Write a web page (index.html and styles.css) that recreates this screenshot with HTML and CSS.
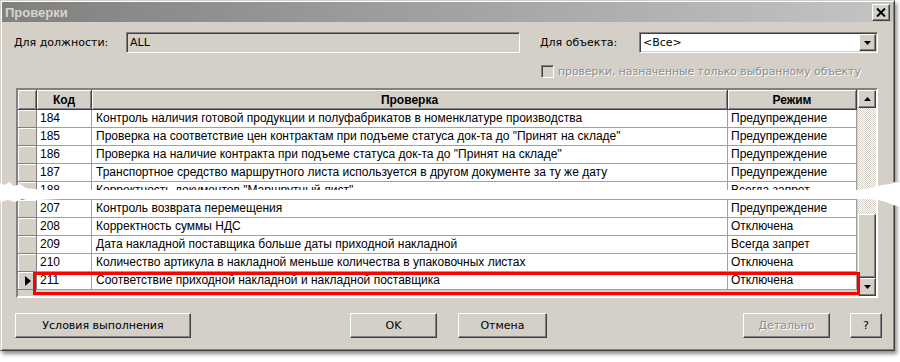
FILE: index.html
```html
<!DOCTYPE html>
<html lang="ru">
<head>
<meta charset="UTF-8">
<title>Проверки</title>
<link rel="stylesheet" href="styles.css">
</head>
<body>
<div class="page">
  <div class="dialog">
    <div class="titlebar">
      <span class="title">Проверки</span>
      <span class="close-btn">
        <svg width="10" height="9" viewBox="0 0 10 9"><path d="M1 0.5 L9 8.5 M9 0.5 L1 8.5" stroke="#000" stroke-width="2"/></svg>
      </span>
    </div>

    <div class="filters">
      <span class="label label-post">Для должности:</span>
      <div class="field field-post">ALL</div>
      <span class="label label-object">Для объекта:</span>
      <div class="combo">
        <span class="combo-text">&lt;Все&gt;</span>
        <span class="raised combo-btn">
          <svg width="7" height="4" viewBox="0 0 7 4"><polygon points="0,0 7,0 3.5,4" fill="#000"/></svg>
        </span>
      </div>
    </div>

    <div class="only-object">
      <span class="checkbox"></span>
      <span class="disabled-text">проверки, назначенные только выбранному объекту</span>
    </div>

    <div class="grid">
      <div class="grid-body">
        <table class="checks">
          <colgroup>
            <col class="col-ind">
            <col class="col-code">
            <col class="col-name">
            <col class="col-mode">
          </colgroup>
          <thead>
            <tr><th></th><th>Код</th><th>Проверка</th><th>Режим</th></tr>
          </thead>
          <tbody id="rows"></tbody>
        </table>
      </div>
      <div class="scrollbar">
        <span class="raised sb-btn">
          <svg width="7" height="4" viewBox="0 0 7 4"><polygon points="0,4 7,4 3.5,0" fill="#000"/></svg>
        </span>
        <span class="sb-track"></span>
        <span class="raised sb-thumb"></span>
        <span class="raised sb-btn">
          <svg width="7" height="4" viewBox="0 0 7 4"><polygon points="0,0 7,0 3.5,4" fill="#000"/></svg>
        </span>
      </div>
      <!-- рамка-выделение текущей строки -->
      <div class="highlight"></div>
    </div>

    <div class="buttons">
      <span class="raised btn btn-cond">Условия выполнения</span>
      <span class="raised btn btn-ok">OK</span>
      <span class="raised btn btn-cancel">Отмена</span>
      <span class="raised btn btn-detail disabled-text">Детально</span>
      <span class="raised btn btn-help">?</span>
    </div>
  </div>
  <div class="tear"></div>
</div>

<script>
  const CHECKS = [
    [184, 'Контроль наличия готовой продукции и полуфабрикатов в номенклатуре производства', 'Предупреждение'],
    [185, 'Проверка на соответствие цен контрактам при подъеме статуса док-та до "Принят на складе"', 'Предупреждение'],
    [186, 'Проверка на наличие контракта при подъеме статуса док-та до "Принят на складе"', 'Предупреждение'],
    [187, 'Транспортное средство маршрутного листа используется в другом документе за ту же дату', 'Предупреждение'],
    [188, 'Корректность документов "Маршрутный лист"', 'Всегда запрет'],
    [207, 'Контроль возврата перемещения', 'Предупреждение'],
    [208, 'Корректность суммы НДС', 'Отключена'],
    [209, 'Дата накладной поставщика больше даты приходной накладной', 'Всегда запрет'],
    [210, 'Количество артикула в накладной меньше количества в упаковочных листах', 'Отключена'],
    [211, 'Соответствие приходной накладной и накладной поставщика', 'Отключена']
  ];
  const CURRENT = 211;

  const tbody = document.getElementById('rows');
  CHECKS.forEach(([code, name, mode]) => {
    const tr = document.createElement('tr');
    const marker = code === CURRENT
      ? '<svg width="6" height="10" viewBox="0 0 6 10"><polygon points="0,0 6,5 0,10" fill="#000"/></svg>'
      : '';
    tr.innerHTML = `<td class="ind">${marker}</td><td>${code}</td><td class="name">${name}</td><td>${mode}</td>`;
    tbody.appendChild(tr);
  });
</script>
</body>
</html>
```

FILE: styles.css
```css
body {
  margin: 0;
  background: #fff;
  font-family: "DejaVu Sans", sans-serif;
  font-size: 11px;
  color: #000;
}
.page {
  position: relative;
  width: 900px;
  height: 362px;
  overflow: hidden;
}
.dialog {
  width: 895px;
  height: 351px;
  box-sizing: border-box;
  padding: 1px;
  background: #d4d0c8;
  border: 1px solid;
  border-color: #d4d0c8 #404040 #404040 #d4d0c8;
  box-shadow: inset 1px 1px #fff, inset -1px -1px #808080, 2px 3px 4px rgba(0,0,0,0.45);
}

/* общий выпуклый вид кнопок */
.raised {
  box-sizing: border-box;
  background: #d4d0c8;
  border: 1px solid;
  border-color: #fff #404040 #404040 #fff;
  box-shadow: inset -1px -1px #808080;
  display: flex;
  align-items: center;
  justify-content: center;
}

.titlebar {
  height: 20px;
  display: flex;
  align-items: center;
  justify-content: space-between;
  padding: 0 3px 0 3px;
  background: linear-gradient(to right, #808080, #c4c4c4);
}
.title {
  font-family: "Liberation Sans", sans-serif;
  font-weight: bold;
  font-size: 13px;
  color: #d8d4cc;
}
.close-btn {
  width: 18px;
  height: 17px;
  box-sizing: border-box;
  background: #d4d0c8;
  border: 1px solid;
  border-color: #fff #404040 #404040 #fff;
  box-shadow: inset -1px -1px #808080;
  display: flex;
  align-items: center;
  justify-content: center;
}

.filters {
  display: flex;
  align-items: center;
  height: 21px;
  margin-top: 10px;
  padding-left: 12px;
}
.label-post {
  width: 112px;
}
.label-object {
  width: 99px;
  margin-left: 20px;
}
.field {
  box-sizing: border-box;
  height: 21px;
  line-height: 19px;
  padding-left: 3px;
  border: 1px solid;
  border-color: #808080 #fff #fff #808080;
  box-shadow: inset 1px 1px #404040, inset -1px -1px #d4d0c8;
}
.field-post {
  width: 394px;
  background: #d4d0c8;
}
.combo {
  box-sizing: border-box;
  width: 239px;
  height: 21px;
  padding: 1px;
  display: flex;
  align-items: center;
  justify-content: space-between;
  background: #fff;
  border: 1px solid;
  border-color: #808080 #fff #fff #808080;
  box-shadow: inset 1px 1px #404040, inset -1px -1px #d4d0c8;
}
.combo-text {
  padding-left: 2px;
}
.combo-btn {
  width: 17px;
  height: 17px;
}

.only-object {
  display: flex;
  align-items: center;
  margin-top: 12px;
  padding-left: 539px;
}
.checkbox {
  width: 13px;
  height: 13px;
  box-sizing: border-box;
  background: #d4d0c8;
  border: 1px solid;
  border-color: #808080 #fff #fff #808080;
  box-shadow: inset 1px 1px #404040, inset -1px -1px #d4d0c8;
}
.only-object .disabled-text {
  margin-left: 4px;
  font-size: 10.8px;
}
.disabled-text {
  color: #8c8c8c;
  text-shadow: 1px 1px 0 #fff;
}

.grid {
  position: relative;
  display: flex;
  width: 862px;
  height: 210px;
  box-sizing: border-box;
  margin: 10px 0 0 14px;
  border: 2px solid;
  border-color: #808080 #fff #fff #808080;
  box-shadow: inset 1px 1px #404040;
}
.grid-body {
  width: 840px;
  overflow: hidden;
  background: #d4d0c8;
}
.checks {
  table-layout: fixed;
  width: 839px;
  border-collapse: separate;
  border-spacing: 0;
  font-family: "Liberation Sans", sans-serif;
  font-size: 12px;
}
.col-ind { width: 19px; }
.col-code { width: 55px; }
.col-name { width: 636px; }
.col-mode { width: 129px; }

.checks th {
  height: 19px;
  padding: 0;
  font-weight: bold;
  text-align: center;
  background: #d4d0c8;
  border-right: 1px solid #404040;
  border-bottom: 1px solid #404040;
  box-shadow: inset 1px 1px #fff, inset -1px -1px #808080;
}
.checks td {
  height: 17px;
  line-height: 17px;
  padding: 0 3px;
  white-space: nowrap;
  overflow: hidden;
  background: #fff;
  border-right: 1px solid #a0a0a0;
  border-bottom: 1px solid #a0a0a0;
}
.checks td.name {
  padding-left: 4px;
}
.checks td.ind {
  padding: 0;
  text-align: center;
  background: #d4d0c8;
  border-right: 1px solid #808080;
  border-bottom: 1px solid #808080;
  box-shadow: inset 1px 1px #fff;
}
.checks td.ind svg {
  display: block;
  margin: 0 auto;
  position: relative;
  left: 1px;
}

.scrollbar {
  width: 18px;
  display: flex;
  flex-direction: column;
}
.sb-btn {
  height: 18px;
}
.sb-track {
  flex: 1;
  background: repeating-conic-gradient(#fff 0 25%, #d4d0c8 0 50%) 0 0 / 2px 2px;
}
.sb-thumb {
  height: 64px;
}

.highlight {
  position: absolute;
  left: 15px;
  top: 182px;
  width: 827px;
  height: 23px;
  box-sizing: border-box;
  border: 3px solid #f00;
}

.buttons {
  display: flex;
  margin-top: 15px;
  padding-left: 13px;
}
.btn {
  height: 25px;
}
.btn-cond { width: 176px; }
.btn-ok { width: 87px; margin-left: 159px; }
.btn-cancel { width: 89px; margin-left: 21px; }
.btn-detail { width: 87px; margin-left: 196px; }
.btn-help { width: 32px; margin-left: 20px; }

/* белый «разрыв» скриншота */
.tear {
  position: absolute;
  left: 0;
  top: 180px;
  width: 900px;
  height: 30px;
  background: #fff;
  clip-path: polygon(0 3px, 5px 5px, 9px 2px, 14px 6px, 20px 4px, 26px 8px, 34px 9px, 45px 10px,
    200px 10px, 400px 10px, 700px 10px, 856px 10px, 864px 9px, 870px 8px, 876px 7px, 882px 5px,
    890px 4px, 895px 2px, 900px 3px, 900px 27px, 893px 25px, 886px 22px, 878px 20px, 870px 19px,
    600px 19px, 300px 19px, 60px 19px, 40px 20px, 30px 21px, 22px 19px, 15px 22px, 8px 20px, 0 22px);
}
```
